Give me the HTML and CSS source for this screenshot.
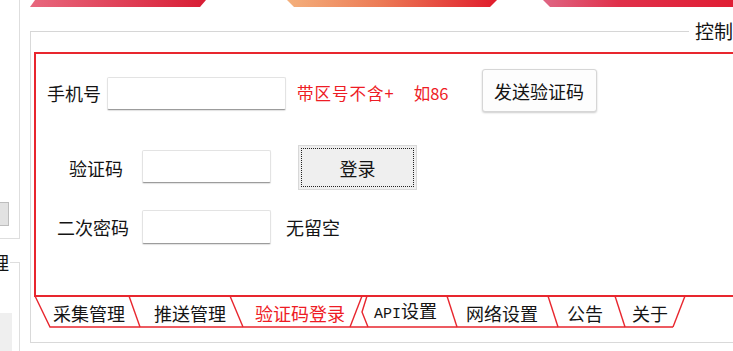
FILE: index.html
```html
<!DOCTYPE html>
<html lang="zh-CN">
<head>
<meta charset="utf-8">
<title>控制</title>
<link rel="stylesheet" href="styles.css">
</head>
<body>
<div class="app">
  <aside class="side">
    <div class="side-top"><span class="side-btn"></span></div>
    <div class="side-grp">
      <div class="side-head"><span class="side-title">采集管理</span><span class="side-corner"></span></div>
      <div class="side-body"><div class="side-list"></div></div>
    </div>
  </aside>
  <main class="main">
    <div class="banners">
      <span class="banner b1"></span>
      <span class="banner b2"></span>
      <span class="banner b3"></span>
    </div>
    <section class="grp">
      <div class="grp-head"><span class="grp-line"></span><span class="grp-title">控制</span></div>
      <div class="panel">
        <div class="row row1">
          <span class="lbl lbl-phone">手机号</span>
          <input class="inp inp-phone" type="text">
          <span class="hint hint-a">带区号不含+</span>
          <span class="hint hint-b">如86</span>
          <button class="btn btn-send" type="button">发送验证码</button>
        </div>
        <div class="row row2">
          <span class="lbl lbl-code">验证码</span>
          <input class="inp inp-code" type="text">
          <button class="btn btn-login" type="button">登录</button>
        </div>
        <div class="row row3">
          <span class="lbl lbl-pwd">二次密码</span>
          <input class="inp inp-pwd" type="text">
          <span class="lbl lbl-note">无留空</span>
        </div>
      </div>
      <div class="tabs">
        <svg class="tab-lines" width="700" height="31" viewBox="0 0 700 31" aria-hidden="true">
          <g fill="none" stroke="#e8262e" stroke-width="1.4">
            <path d="M1 -1 L16 30 L639 30"/>
            <path d="M95 -1 L106 30"/>
            <path d="M196 -1 L209 30"/>
            <path d="M316 30 L328 -1"/>
            <path d="M333 -1 L328 15 L334 30"/>
            <path d="M413 -1 L423 30"/>
            <path d="M514 -1 L524 30"/>
            <path d="M581 -1 L591 30"/>
            <path d="M639 30 L651 -1"/>
          </g>
        </svg>
        <span class="tab">采集管理</span>
        <span class="tab">推送管理</span>
        <span class="tab tab-active">验证码登录</span>
        <span class="tab"><span class="mono">API</span>设置</span>
        <span class="tab">网络设置</span>
        <span class="tab">公告</span>
        <span class="tab">关于</span>
      </div>
    </section>
  </main>
</div>
</body>
</html>
```
FILE: styles.css
```css
* { box-sizing: border-box; }

html, body {
  margin: 0;
  padding: 0;
  background: #ffffff;
}

body {
  width: 733px;
  height: 351px;
  overflow: hidden;
  font-family: "Noto Sans CJK SC", "Noto Sans", sans-serif;
  color: #141414;
}

.app {
  display: flex;
  height: 351px;
}

/* left panel (partially visible) */
.side {
  width: 20px;
  flex: none;
  display: flex;
  flex-direction: column;
  overflow: hidden;
}

.side-top {
  height: 239px;
  border-right: 1px solid #dedede;
  border-bottom: 1px solid #dedede;
  display: flex;
  flex-direction: column;
  justify-content: flex-end;
  padding-bottom: 12px;
}

.side-btn {
  display: block;
  width: 9px;
  height: 24px;
  background: #e2e2e2;
  border: 1px solid #bdbdbd;
  border-left: none;
}

.side-grp {
  flex: 1;
  display: flex;
  flex-direction: column;
  margin-top: 13px;
}

.side-head {
  display: flex;
  justify-content: flex-end;
  height: 20px;
}

.side-title {
  flex: none;
  font-size: 18px;
  line-height: 20px;
  white-space: nowrap;
}

.side-corner {
  flex: none;
  align-self: flex-end;
  width: 10px;
  height: 10px;
  margin-left: 1px;
  border-top: 1px solid #dedede;
  border-right: 1px solid #dedede;
}

.side-body {
  flex: 1;
  display: flex;
  flex-direction: column;
  border-right: 1px solid #dedede;
  padding-top: 41px;
}

.side-list {
  flex: 1;
  width: 12px;
  background: #efefef;
}

/* main area */
.main {
  flex: 1;
  min-width: 0;
  height: 351px;
  overflow: hidden;
}

.banners {
  display: flex;
  height: 7px;
}

.banner { display: block; height: 7px; }

.b1 {
  margin-left: 10px;
  width: 176px;
  clip-path: polygon(5px 0, 100% 0, calc(100% - 6px) 100%, 0 100%);
  background: linear-gradient(90deg, #e8687e, #d81d34);
}

.b2 {
  margin-left: 81px;
  width: 210px;
  clip-path: polygon(0 0, 100% 0, calc(100% - 7px) 100%, 7px 100%);
  border-radius: 0 0 3px 5px;
  background: linear-gradient(90deg, #f4b07c, #ec7a55 45%, #e01c2c);
}

.b3 {
  margin-left: 46px;
  flex: 1;
  clip-path: polygon(0 0, 100% 0, 100% 100%, 7px 100%);
  border-radius: 0 0 0 6px;
  background: linear-gradient(90deg, #df6684, #e0304a 40%, #e01e34);
}

/* group box */
.grp {
  margin: 24px 0 0 10px;
  border-left: 1px solid #d9d9d9;
  border-bottom: 1px solid #d9d9d9;
  padding: 0 0 14px 3px;
}

.grp-head {
  display: flex;
  height: 0;
}

.grp-line {
  flex: 1;
  align-self: flex-start;
  margin-left: -4px;
  border-top: 1px solid #d6d6d6;
}

.grp-title {
  align-self: center;
  flex: none;
  font-size: 19px;
  line-height: 20px;
  padding-left: 6px;
  white-space: nowrap;
}

.panel {
  margin-top: 21px;
  height: 245px;
  border: 2px solid #e8262e;
  border-right: none;
}

.row {
  display: flex;
  align-items: center;
}

.row1 { margin-top: 15px; height: 43px; }
.row2 { margin-top: 33px; height: 45px; }
.row3 { margin-top: 20px; height: 34px; }

.lbl {
  flex: none;
  font-size: 18px;
  line-height: 24px;
  white-space: nowrap;
}

.lbl-phone { margin-left: 11px; margin-top: 4px; }
.lbl-code { margin-left: 33px; }
.lbl-pwd { margin-left: 21px; }
.lbl-note { margin-left: 15px; }

.inp {
  flex: none;
  height: 33px;
  padding: 0;
  background: #ffffff;
  border: 1px solid #e3e3e3;
  border-bottom-color: #9c9c9c;
  border-radius: 2px;
  box-shadow: 0 1px 1px rgba(0, 0, 0, 0.12);
  font: inherit;
}

.inp-phone { width: 179px; margin-left: 6px; margin-top: 6px; }
.inp-code { width: 129px; margin-left: 19px; margin-bottom: 2px; }
.inp-pwd { width: 129px; height: 34px; margin-left: 13px; }

.hint {
  flex: none;
  font-size: 16.5px;
  line-height: 24px;
  margin-top: 4px;
  color: #ee1c25;
  white-space: nowrap;
}

.hint-a { margin-left: 11px; letter-spacing: 1px; }
.hint-b { margin-left: 19px; }

.btn {
  flex: none;
  padding: 0;
  font-family: inherit;
  font-size: 18px;
  color: #141414;
  cursor: default;
}

.btn-send {
  margin-left: 33px;
  width: 115px;
  height: 43px;
  background: #fdfdfd;
  border: 1px solid #d6d6d6;
  border-radius: 3px;
  box-shadow: 0 1px 2px rgba(0, 0, 0, 0.2);
}

.btn-login {
  margin-left: 27px;
  width: 119px;
  height: 45px;
  background: #efefef;
  border: 1px solid #d8d8d8;
  outline: 1px dotted #222222;
  outline-offset: -4px;
}

/* bottom tabs */
.tabs {
  position: relative;
  height: 31px;
  display: flex;
  align-items: center;
  padding-left: 4px;
}

.tab-lines {
  position: absolute;
  left: 0;
  top: 0;
  overflow: visible;
}

.tab {
  position: relative;
  flex: none;
  padding: 0 14px 0 15px;
  font-size: 18px;
  line-height: 20px;
  white-space: nowrap;
  color: #141414;
}

.tab-active { color: #ee1c25; }

.mono {
  font-family: "Liberation Mono", monospace;
  font-size: 15px;
}
```
